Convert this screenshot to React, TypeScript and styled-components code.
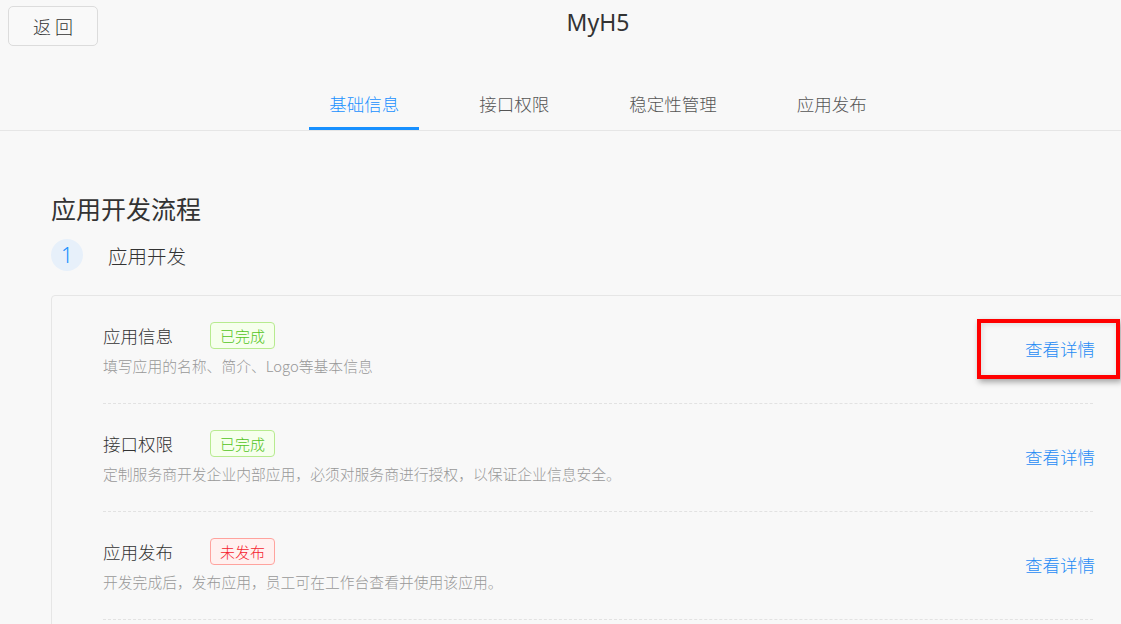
import React from "react";
import styled, { createGlobalStyle } from "styled-components";

const GlobalStyle = createGlobalStyle`
  html, body {
    margin: 0;
    padding: 0;
    background: #f8f8f8;
    overflow: hidden;
  }
  body {
    font-family: "Noto Sans CJK SC", "Noto Sans", sans-serif;
    font-weight: 300;
    color: #333;
  }
`;

const Page = styled.div`
  width: 1196px;
  min-height: 624px;
  background: #f8f8f8;
`;

const Header = styled.header`
  border-bottom: 1px solid #e6e6e6;
`;

const TopRow = styled.div`
  display: grid;
  grid-template-columns: 1fr auto 1fr;
  height: 80px;
`;

const BackButton = styled.button`
  justify-self: start;
  align-self: start;
  margin: 6px 0 0 8px;
  width: 90px;
  height: 40px;
  border: 1px solid #dcdcdc;
  border-radius: 5px;
  background: #f9f9f9;
  font-family: "Noto Sans CJK SC", sans-serif;
  font-weight: 300;
  font-size: 18px;
  color: #333;
  padding: 0;
  cursor: pointer;
`;

const AppTitle = styled.h1`
  margin: 6px 0 0;
  font-family: "Noto Sans", "Noto Sans CJK SC", sans-serif;
  font-weight: 400;
  font-size: 23px;
  line-height: 32px;
  color: #333;
`;

const Tabs = styled.nav`
  display: flex;
  justify-content: center;
  gap: 40px;
`;

const Tab = styled.div<{ $active?: boolean }>`
  padding: 12px 20px 11px;
  font-size: 17.5px;
  line-height: 24px;
  color: ${(p) => (p.$active ? "#1890ff" : "#555")};
  border-bottom: 3px solid ${(p) => (p.$active ? "#1890ff" : "transparent")};
`;

const Main = styled.main`
  padding: 60px 51px 0;
`;

const SectionTitle = styled.h2`
  margin: 0;
  font-weight: 400;
  font-size: 25px;
  line-height: 34px;
  color: #333;
`;

const StepRow = styled.div`
  display: flex;
  align-items: center;
  gap: 25px;
  margin-top: 14px;
`;

const StepNumber = styled.div`
  width: 32px;
  height: 32px;
  border-radius: 50%;
  background: #e7f0fa;
  color: #1890ff;
  display: flex;
  align-items: center;
  justify-content: center;
  font-family: "Noto Sans", sans-serif;
  font-size: 21px;
`;

const StepLabel = styled.span`
  font-size: 19.5px;
  color: #333;
`;

const Card = styled.section`
  margin-top: 24px;
  border: 1px solid #e6e6e6;
  border-radius: 4px;
  background: #f8f8f8;
  padding: 0 51px 40px;
`;

const Item = styled.div`
  display: flex;
  align-items: center;
  padding: 25px 0 26px;
  border-bottom: 1px dashed #e2e2e2;
`;

const ItemBody = styled.div`
  flex: 1;
`;

const TitleRow = styled.div`
  display: flex;
  align-items: center;
  height: 28px;
`;

const ItemTitle = styled.span`
  font-size: 17.5px;
  color: #333;
  width: 107px;
`;

const Tag = styled.span<{ $tone: "success" | "error" }>`
  display: inline-flex;
  align-items: center;
  height: 25px;
  padding: 0 9px;
  border-radius: 4px;
  font-size: 15px;
  border: 1px solid ${(p) => (p.$tone === "success" ? "#b7eb8f" : "#ffa39e")};
  background: ${(p) => (p.$tone === "success" ? "#f6ffed" : "#fff1f0")};
  color: ${(p) => (p.$tone === "success" ? "#52c41a" : "#f5222d")};
`;

const Desc = styled.p`
  margin: 6px 0 0;
  font-size: 14.8px;
  line-height: 22px;
  color: #999;
`;

const DetailLink = styled.a`
  position: relative;
  margin-right: -2px;
  font-size: 17.5px;
  line-height: 24px;
  color: #1f8cf5;
  text-decoration: none;
  cursor: pointer;
`;

const Highlight = styled.span`
  position: absolute;
  left: -48px;
  right: -25px;
  top: -18px;
  bottom: -18px;
  border: 4px solid #f00;
  box-shadow: 2px 3px 6px rgba(0, 0, 0, 0.35), inset 1px 1px 6px rgba(0, 0, 0, 0.12);
  pointer-events: none;
`;

type Step = {
  title: string;
  status: string;
  tone: "success" | "error";
  desc: string;
  highlight?: boolean;
};

const steps: Step[] = [
  {
    title: "应用信息",
    status: "已完成",
    tone: "success",
    desc: "填写应用的名称、简介、Logo等基本信息",
    highlight: true,
  },
  {
    title: "接口权限",
    status: "已完成",
    tone: "success",
    desc: "定制服务商开发企业内部应用，必须对服务商进行授权，以保证企业信息安全。",
  },
  {
    title: "应用发布",
    status: "未发布",
    tone: "error",
    desc: "开发完成后，发布应用，员工可在工作台查看并使用该应用。",
  },
];

const tabs = ["基础信息", "接口权限", "稳定性管理", "应用发布"];

export default function App() {
  return (
    <Page>
      <GlobalStyle />
      <Header>
        <TopRow>
          <BackButton>返 回</BackButton>
          <AppTitle>MyH5</AppTitle>
          <div />
        </TopRow>
        <Tabs>
          {tabs.map((t, i) => (
            <Tab key={t} $active={i === 0}>
              {t}
            </Tab>
          ))}
        </Tabs>
      </Header>
      <Main>
        <SectionTitle>应用开发流程</SectionTitle>
        <StepRow>
          <StepNumber>1</StepNumber>
          <StepLabel>应用开发</StepLabel>
        </StepRow>
        <Card>
          {steps.map((s) => (
            <Item key={s.title}>
              <ItemBody>
                <TitleRow>
                  <ItemTitle>{s.title}</ItemTitle>
                  <Tag $tone={s.tone}>{s.status}</Tag>
                </TitleRow>
                <Desc>{s.desc}</Desc>
              </ItemBody>
              <DetailLink>
                查看详情
                {s.highlight && <Highlight />}
              </DetailLink>
            </Item>
          ))}
        </Card>
      </Main>
    </Page>
  );
}
